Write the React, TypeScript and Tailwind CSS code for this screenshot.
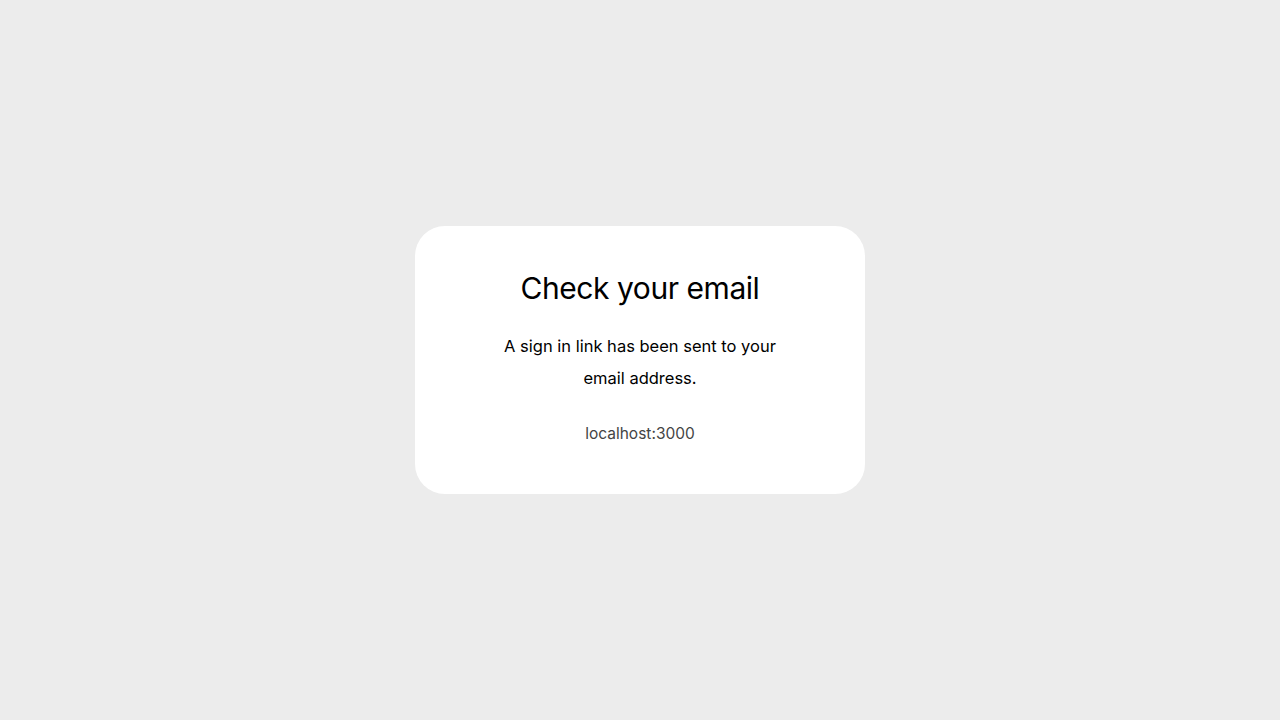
export default function App() {
  return (
    <div
      className="flex min-h-screen w-full items-center justify-center bg-[#ececec]"
      style={{ fontFamily: "Inter, 'Noto Sans', sans-serif" }}
    >
      <div className="flex w-[450px] h-[268px] flex-col items-center rounded-[30px] bg-white px-10 pt-[42px] text-center">
        <h1 className="text-[30px] leading-[40px] font-normal tracking-[-0.015em] text-black">
          Check your email
        </h1>
        <p className="mt-[22px] max-w-[290px] text-[16.5px] leading-[32px] text-black">
          A sign in link has been sent to your email address.
        </p>
        <p className="mt-[28px] text-[15.5px] leading-[24px] text-[#444]">localhost:3000</p>
      </div>
    </div>
  );
}
